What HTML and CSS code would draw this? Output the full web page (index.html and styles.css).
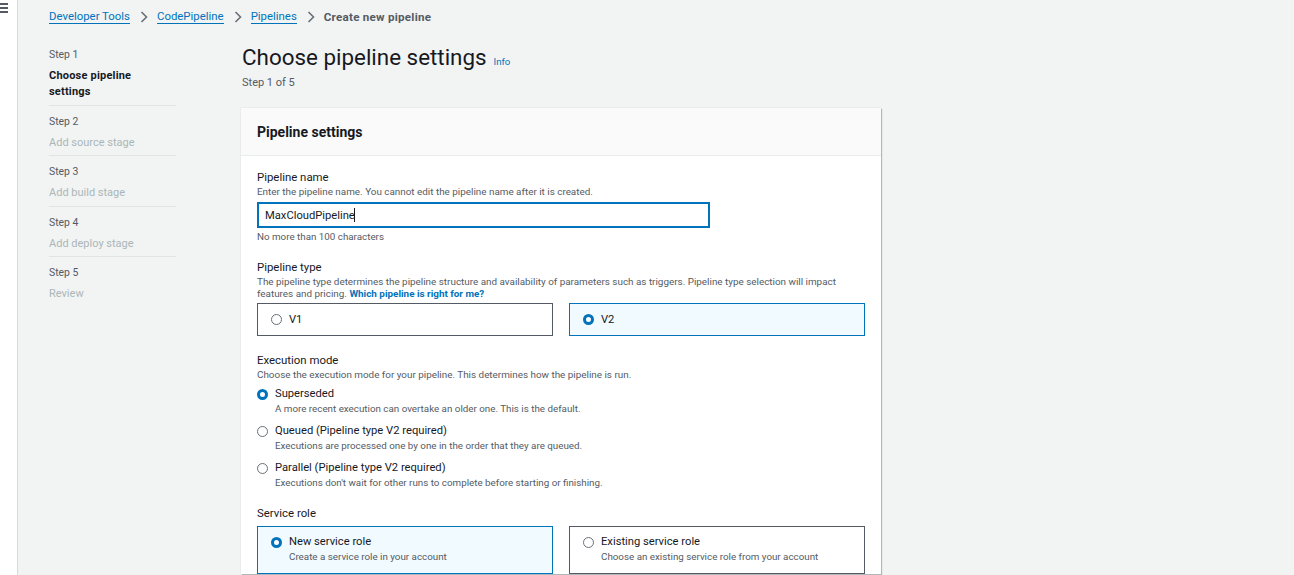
FILE: index.html
```html
<!DOCTYPE html>
<html>
<head>
<meta charset="utf-8">
<link rel="stylesheet" href="styles.css">
</head>
<body>
<div class="app">
  <aside class="rail">
    <div class="burger"><span></span><span></span><span></span></div>
  </aside>
  <div class="main">
    <nav class="crumbs">
      <a>Developer Tools</a><span class="chev"><svg width="8" height="12" viewBox="0 0 8 12"><path d="M1.5 1 L6.5 6 L1.5 11" fill="none" stroke="#687078" stroke-width="1.6"/></svg></span>
      <a>CodePipeline</a><span class="chev"><svg width="8" height="12" viewBox="0 0 8 12"><path d="M1.5 1 L6.5 6 L1.5 11" fill="none" stroke="#687078" stroke-width="1.6"/></svg></span>
      <a>Pipelines</a><span class="chev"><svg width="8" height="12" viewBox="0 0 8 12"><path d="M1.5 1 L6.5 6 L1.5 11" fill="none" stroke="#687078" stroke-width="1.6"/></svg></span>
      <span class="current">Create new pipeline</span>
    </nav>
    <div class="layout">
      <ul class="steps">
        <li class="step active"><div class="step-num">Step 1</div><div class="step-name">Choose pipeline settings</div></li>
        <li class="step"><div class="step-num">Step 2</div><div class="step-name">Add source stage</div></li>
        <li class="step"><div class="step-num">Step 3</div><div class="step-name">Add build stage</div></li>
        <li class="step"><div class="step-num">Step 4</div><div class="step-name">Add deploy stage</div></li>
        <li class="step"><div class="step-num">Step 5</div><div class="step-name">Review</div></li>
      </ul>
      <div class="content">
        <header class="page-head">
          <h1>Choose pipeline settings <a class="info">Info</a></h1>
          <div class="subtitle">Step 1 of 5</div>
        </header>
        <section class="panel">
          <div class="panel-head"><h2>Pipeline settings</h2></div>
          <div class="panel-body">
            <div class="field field-name">
              <div class="label">Pipeline name</div>
              <div class="desc">Enter the pipeline name. You cannot edit the pipeline name after it is created.</div>
              <div class="input"><span>MaxCloudPipeline</span><span class="caret"></span></div>
              <div class="hint">No more than 100 characters</div>
            </div>
            <div class="field">
              <div class="label">Pipeline type</div>
              <div class="desc"><span>The pipeline type determines the pipeline structure and availability of parameters such as triggers. Pipeline type selection will impact features and pricing.</span> <a class="strong-link">Which pipeline is right for me?</a></div>
              <div class="tiles">
                <div class="tile"><span class="radio"></span><span class="tile-label">V1</span></div>
                <div class="tile selected"><span class="radio on"></span><span class="tile-label">V2</span></div>
              </div>
            </div>
            <div class="field">
              <div class="label">Execution mode</div>
              <div class="desc">Choose the execution mode for your pipeline. This determines how the pipeline is run.</div>
              <div class="options">
                <div class="option"><span class="radio on"></span><div><div class="opt-label">Superseded</div><div class="opt-desc">A more recent execution can overtake an older one. This is the default.</div></div></div>
                <div class="option"><span class="radio"></span><div><div class="opt-label">Queued (Pipeline type V2 required)</div><div class="opt-desc">Executions are processed one by one in the order that they are queued.</div></div></div>
                <div class="option"><span class="radio"></span><div><div class="opt-label">Parallel (Pipeline type V2 required)</div><div class="opt-desc">Executions don't wait for other runs to complete before starting or finishing.</div></div></div>
              </div>
            </div>
            <div class="field">
              <div class="label">Service role</div>
              <div class="tiles roles">
                <div class="tile tall selected"><span class="radio on"></span><div><div class="tile-label">New service role</div><div class="opt-desc">Create a service role in your account</div></div></div>
                <div class="tile tall"><span class="radio"></span><div><div class="tile-label">Existing service role</div><div class="opt-desc">Choose an existing service role from your account</div></div></div>
              </div>
            </div>
          </div>
        </section>
      </div>
    </div>
  </div>
</div>
</body>
</html>
```
FILE: styles.css
```css
* { box-sizing: border-box; }
html, body { margin: 0; padding: 0; }
body {
  font-family: Roboto, "Noto Sans", Arial, sans-serif;
  color: #16191f;
  background: #f2f3f3;
  height: 575px;
  overflow: hidden;
}
a { text-decoration: none; }
.app { display: flex; height: 575px; }
.rail {
  width: 18px;
  flex: none;
  background: #ffffff;
  border-right: 1px solid #d5dbdb;
}
.burger { display: flex; flex-direction: column; gap: 2px; padding-top: 3px; width: 8px; }
.burger span { display: block; height: 2px; background: #545b64; }
.main { flex: 1; padding-left: 31px; }
.crumbs {
  display: flex; align-items: center;
  height: 35px;
  font-size: 11.4px;
  padding-bottom: 1px;
}
.crumbs a { color: #0073bb; border-bottom: 1px solid #0073bb; line-height: 13px; }
.crumbs .chev { display: inline-flex; margin: 0 9px 0 10px; }
.crumbs .current { color: #545b64; font-weight: 700; font-size: 11.6px; letter-spacing: 0.25px; }
.layout { display: flex; }
.steps {
  list-style: none; margin: 0; padding: 10px 0 0 0;
  width: 127px; flex: none;
  font-size: 10.4px;
}
.step { padding: 9px 0 4.5px; border-bottom: 1px solid #e1e4e4; }
.step:first-child { padding-top: 3px; }
.step:last-child { border-bottom: none; }
.step-num { color: #545b64; line-height: 13px; margin-bottom: 7px; }
.step-name { color: #aab7b8; line-height: 16px; font-size: 11px; }
.step.active .step-name { color: #16191f; font-weight: 700; max-width: 100px; letter-spacing: 0.2px; }
.content { margin-left: 65px; width: 640px; }
.page-head { padding: 8px 0 19px 1px; }
h1 { margin: 0; font-weight: 400; font-size: 22.4px; line-height: 28px; display: flex; align-items: baseline; }
.info { color: #0073bb; font-size: 9.6px; margin-left: 7px; }
.subtitle { color: #545b64; font-size: 11px; margin-top: 0; line-height: 13px; }
.panel {
  background: #ffffff;
  box-shadow: 1px 1px 1px 0 rgba(0,28,36,0.25), 0 0 1px 0 rgba(0,28,36,0.2);
}
.panel-head {
  background: #fafafa;
  border-bottom: 1px solid #eaeded;
  height: 48px;
  display: flex; align-items: center;
  padding: 1px 16px 0;
}
h2 { margin: 0; font-size: 14px; font-weight: 700; }
.panel-body { padding: 14px 16px 0 16px; }
.field { margin-bottom: 17px; }
.field-name { margin-bottom: 18px; }
.label { font-size: 11.4px; line-height: 14px; }
.desc { font-size: 9.9px; line-height: 12px; color: #545b64; margin-top: 2px; max-width: 600px; }
.strong-link { color: #0073bb; font-weight: 700; }
.input {
  margin-top: 4px;
  width: 453px; height: 26px;
  border: 2px solid #0073bb;
  display: flex; align-items: center;
  padding-left: 6px;
  font-size: 11.2px;
}
.caret { display: inline-block; width: 1px; height: 14px; background: #16191f; margin-left: -1px; }
.hint { font-size: 9.8px; color: #545b64; margin-top: 3px; }
.tiles { display: grid; grid-template-columns: 296px 296px; column-gap: 16px; margin-top: 3px; }
.tiles.roles { margin-top: 6px; }
.tile {
  height: 33px;
  border: 1px solid #545b64;
  display: flex; align-items: center;
  padding-left: 13px;
  font-size: 11.2px;
}
.tile .radio { margin-right: 7px; }
.tile.selected { background: #f1faff; border-color: #0073bb; }
.tile.tall { height: 48px; align-items: flex-start; padding-top: 8px; }
.tile.tall .radio { margin-top: 2px; }
.tile-label { line-height: 14px; }
.radio {
  width: 11px; height: 11px; border-radius: 50%;
  border: 1px solid #687078;
  flex: none;
  margin-right: 8px;
  background: #fff;
}
.radio.on { border: 3.5px solid #0073bb; }
.options { margin-top: 6px; display: flex; flex-direction: column; gap: 9px; }
.option { display: flex; align-items: flex-start; }
.option .radio { margin-top: 2px; margin-right: 7px; }
.opt-label { font-size: 11.2px; line-height: 14px; }
.opt-desc { font-size: 9.8px; color: #545b64; line-height: 12px; margin-top: 2px; }
```
